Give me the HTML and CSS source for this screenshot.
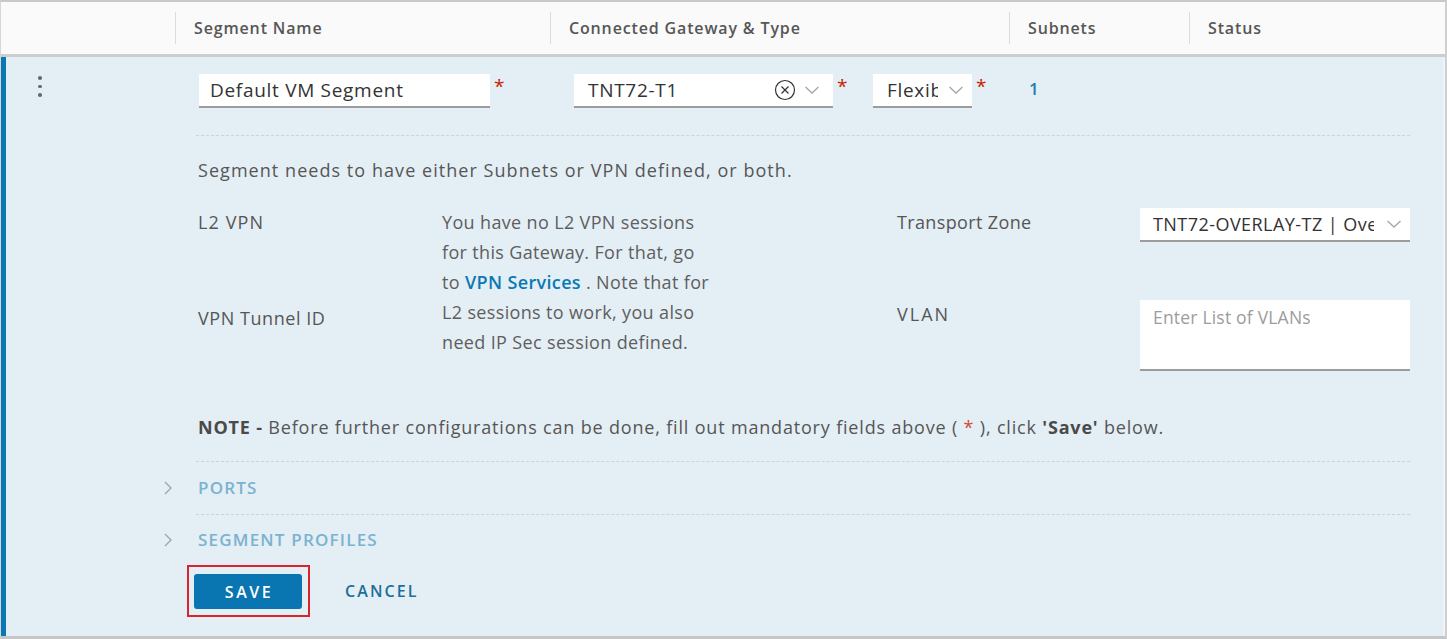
FILE: index.html
```html
<!DOCTYPE html>
<html lang="en">
<head>
<meta charset="utf-8">
<title>Segments</title>
<link rel="stylesheet" href="styles.css">
</head>
<body>
<div class="table">
  <div class="thead">
    <div class="th th-first"></div>
    <div class="th">Segment Name</div>
    <div class="th">Connected Gateway &amp; Type</div>
    <div class="th">Subnets</div>
    <div class="th">Status</div>
  </div>
  <div class="row">
    <div class="fields">
      <div class="cell cell-menu">
        <span class="kebab"><i></i><i></i><i></i></span>
      </div>
      <div class="cell cell-name">
        <div class="input name-input">Default VM Segment</div>
        <span class="req">*</span>
      </div>
      <div class="cell cell-gw">
        <div class="input select gw-select">
          <span class="val">TNT72-T1</span>
          <svg class="clear" width="22" height="22" viewBox="0 0 22 22"><circle cx="11" cy="11" r="9.5" fill="none" stroke="#333" stroke-width="1.2"/><path d="M7.5 7.5 L14.5 14.5 M14.5 7.5 L7.5 14.5" stroke="#333" stroke-width="1.2"/></svg>
          <svg class="chev" width="16" height="10" viewBox="0 0 16 10"><path d="M1.5 2 L8 8 L14.5 2" fill="none" stroke="#a8a8a8" stroke-width="1.4"/></svg>
        </div>
        <span class="req">*</span>
        <div class="input select type-select">
          <span class="val clip">Flexible</span>
          <svg class="chev" width="16" height="10" viewBox="0 0 16 10"><path d="M1.5 2 L8 8 L14.5 2" fill="none" stroke="#a8a8a8" stroke-width="1.4"/></svg>
        </div>
        <span class="req">*</span>
      </div>
      <div class="cell cell-subnets"><span class="count">1</span></div>
      <div class="cell"></div>
    </div>

    <div class="detail">
      <div class="block first">
        <p class="msg">Segment needs to have either Subnets or VPN defined, or both.</p>
        <div class="form-grid">
          <div class="lbl l2">L2 VPN</div>
          <div class="para">You have no L2 VPN sessions<br>for this Gateway. For that, go<br>to <a class="link">VPN Services</a> . Note that for<br>L2 sessions to work, you also<br>need IP Sec session defined.</div>
          <div class="lbl tz">Transport Zone</div>
          <div class="input select tz-select">
            <span class="val clip">TNT72-OVERLAY-TZ | Overlay</span>
            <svg class="chev" width="16" height="10" viewBox="0 0 16 10"><path d="M1.5 2 L8 8 L14.5 2" fill="none" stroke="#a8a8a8" stroke-width="1.4"/></svg>
          </div>
          <div class="lbl tunnel">VPN Tunnel ID</div>
          <div class="lbl vlan">VLAN</div>
          <div class="input textarea">Enter List of VLANs</div>
        </div>
        <p class="note"><b>NOTE -</b> Before further configurations can be done, fill out mandatory fields above ( <span class="req-inline">*</span> ), click <b>'Save'</b> below.</p>
      </div>
      <div class="acc">
        <span class="acc-chev"><svg width="10" height="16" viewBox="0 0 10 16"><path d="M2 2 L8 8 L2 14" fill="none" stroke="#9aa3a8" stroke-width="1.3"/></svg></span>
        <div class="acc-title">PORTS</div>
      </div>
      <div class="acc acc2">
        <span class="acc-chev"><svg width="10" height="16" viewBox="0 0 10 16"><path d="M2 2 L8 8 L2 14" fill="none" stroke="#9aa3a8" stroke-width="1.3"/></svg></span>
        <div class="acc-title">SEGMENT PROFILES</div>
      </div>
      <div class="actions">
        <div class="highlight"><button class="btn-primary">SAVE</button></div>
        <button class="btn-link">CANCEL</button>
      </div>
    </div>
  </div>
</div>
</body>
</html>
```

FILE: styles.css
```css
* { box-sizing: border-box; }
html, body { margin: 0; padding: 0; background: #fff; }
body {
  font-family: "Open Sans", "Liberation Sans", sans-serif;
  color: #565656;
  width: 1447px;
  height: 639px;
  overflow: hidden;
}
.table {
  width: 1447px;
  height: 639px;
  border-top: 2px solid #c9c9c9;
  border-left: 1px solid #d6d6d6;
  border-right: 2px solid #cfcfcf;
  border-bottom: 3px solid #c6c6c6;
  display: flex;
  flex-direction: column;
}
.thead {
  height: 55px;
  background: #fafafa;
  border-bottom: 3px solid #cdcdcd;
  display: grid;
  grid-template-columns: 174px 375px 459px 180px 1fr;
}
.th {
  position: relative;
  font-size: 16px;
  font-weight: 600;
  color: #565656;
  padding-left: 19px;
  line-height: 52px;
  letter-spacing: 0.85px;
}
.th::before {
  content: "";
  position: absolute;
  left: 0;
  top: 10px;
  bottom: 10px;
  width: 1px;
  background: #dcdcdc;
}
.th-first::before { display: none; }

.row {
  flex: 1;
  background: #e4eef5;
  border-left: 5px solid #0a79b3;
  border-right: 2px solid #eef3f7;
}
.fields {
  display: grid;
  grid-template-columns: 169px 375px 459px 180px 1fr;
  padding-top: 17px;
  height: 51px;
}
.cell { display: flex; align-items: flex-start; }
.cell-menu { padding-left: 32px; padding-top: 2px; }
.kebab { display: flex; flex-direction: column; gap: 5px; }
.kebab i { width: 3.5px; height: 3.5px; border-radius: 50%; background: #6a6a6a; display: block; }
.cell-name { padding-left: 24px; }
.cell-gw { padding-left: 24px; }
.cell-subnets { padding-left: 20px; }

.input {
  background: #fff;
  border-bottom: 2px solid #9c9c9c;
  height: 34px;
  font-size: 19px;
  letter-spacing: 0.7px;
  color: #333;
  padding-left: 11px;
  line-height: 33px;
  white-space: nowrap;
  flex-shrink: 0;
}
.name-input { width: 291px; }
.select { display: flex; align-items: center; padding-right: 8px; }
.select .val { flex: 1; overflow: hidden; }
.gw-select { width: 259px; padding-left: 14px; padding-right: 13px; }
.gw-select .clear { margin-right: 8px; flex-shrink: 0; }
.type-select { width: 99px; padding-left: 14px; }
.type-select .val { width: 51px; flex: none; margin-right: 10px; }
.chev { flex-shrink: 0; }
.clip { overflow: hidden; white-space: nowrap; }
.req {
  color: #c92100;
  font-size: 19px;
  line-height: 20px;
  width: 11px;
  flex-shrink: 0;
  margin-left: 4px;
  margin-right: 25px;
  margin-top: 2px;
}
.count {
  color: #1a7fb3;
  font-weight: 600;
  font-size: 17px;
  line-height: 30px;
}

.detail { margin-left: 154px; width: 1250px; }
.block { padding-left: 36px; }
.first .msg {
  border-top: 1px dashed #cbd3d8;
  margin: 27px 0 0;
  padding: 19px 0 0 2px;
  font-size: 18px;
  line-height: 30px;
  letter-spacing: 1.05px;
}
.form-grid {
  margin-top: 22px;
  padding-left: 2px;
  display: grid;
  grid-template-columns: 244px 455px 243px 270px;
  grid-template-rows: 92px 72px;
  font-size: 18px;
  line-height: 30px;
}
.lbl { color: #565656; letter-spacing: 0.5px; }
.l2 { grid-column: 1; grid-row: 1; letter-spacing: 1.1px; }
.para { grid-column: 2; grid-row: 1 / span 2; color: #5e5e5e; letter-spacing: 0.35px; }
.tz { grid-column: 3; grid-row: 1; letter-spacing: 0.36px; }
.tz-select { grid-column: 4; grid-row: 1; margin-top: 1px; padding-left: 13px; font-size: 18px; letter-spacing: 0.45px; }
.tz-select .val { margin-right: 12px; }
.tunnel { grid-column: 1; grid-row: 2; margin-top: 4px; letter-spacing: 0.55px; }
.vlan { grid-column: 3; grid-row: 2; letter-spacing: 2px; }
.textarea {
  grid-column: 4; grid-row: 2;
  margin-top: 1px;
  height: 71px;
  color: #9c9c9c;
  padding-left: 13px;
  line-height: 34px;
  font-size: 17.5px;
  letter-spacing: 0.2px;
}
.link { color: #0a79b3; font-weight: 600; }
.note {
  margin: 41px 0 19px;
  padding-left: 2px;
  font-size: 18px;
  line-height: 30px;
  letter-spacing: 0.82px;
}
.note b { font-weight: 700; color: #4a4a4a; }
.req-inline { color: #d24a3a; }

.acc { display: flex; }
.acc-chev { width: 36px; padding-left: 3px; display: flex; align-items: center; }
.acc-title {
  flex: 1;
  border-top: 1px dashed #cbd3d8;
  height: 53px;
  line-height: 52px;
  padding-left: 2px;
  font-size: 17px;
  font-weight: 600;
  color: #7ab3d0;
  letter-spacing: 1.2px;
}
.acc2 .acc-title { height: 51px; line-height: 50px; }

.actions { display: flex; align-items: center; margin-left: 27px; }
.highlight {
  border: 2px solid #d9232e;
  padding: 7px 6px 6px 5px;
}
.btn-primary {
  display: block;
  width: 108px;
  height: 35px;
  border: none;
  border-radius: 3px;
  background: #0a76b1;
  color: #fff;
  font-family: inherit;
  font-size: 16px;
  font-weight: 600;
  letter-spacing: 2.5px;
  padding: 0 0 0 2px;
}
.btn-link {
  background: none;
  border: none;
  margin-left: 35px;
  padding: 0;
  font-family: inherit;
  font-size: 16px;
  font-weight: 600;
  letter-spacing: 2.1px;
  color: #1c6f98;
}
```
